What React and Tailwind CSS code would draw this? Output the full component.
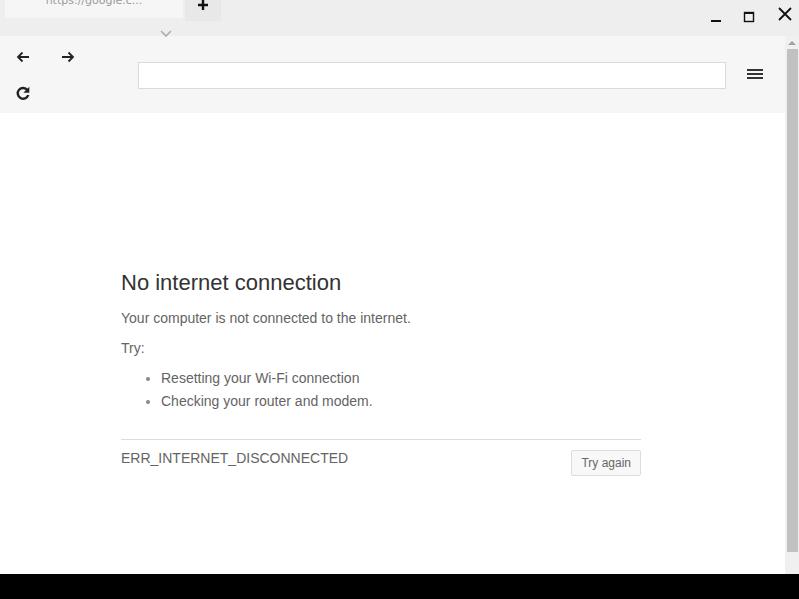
const Icon = ({ children, size = 16 }) => (
  <svg width={size} height={size} viewBox="0 0 16 16" fill="none" stroke="#222" strokeWidth="1.8">
    {children}
  </svg>
);

const App = () => {
  return (
    <div className="w-[799px] h-[599px] flex flex-col bg-black overflow-hidden font-['Liberation_Sans',Arial,sans-serif]">
      {/* title bar */}
      <div className="h-[36px] bg-[#eeeeee] flex relative shrink-0">
        <div className="ml-[5px] w-[178px] h-[18px] bg-[#f6f6f6] overflow-hidden flex justify-center">
          <span className="text-[11px] leading-[12px] text-[#9a9a9a] -mt-[5px] font-['DejaVu_Sans',sans-serif]">
            https://google.c...
          </span>
        </div>
        <div className="ml-[2px] w-[36px] h-[21px] bg-[#e8e8e8] flex items-start justify-center">
          <svg width="12" height="12" viewBox="0 0 12 12" className="-mt-[1px]">
            <path d="M6 1v10M1 6h10" stroke="#111" strokeWidth="2.4" />
          </svg>
        </div>
        <svg width="12" height="7" viewBox="0 0 12 7" className="absolute left-[160px] top-[30px]">
          <path d="M1 1l5 5 5-5" stroke="#aaa" strokeWidth="1.5" fill="none" />
        </svg>
        <div className="ml-auto flex items-start">
          <svg width="12" height="12" viewBox="0 0 12 12" className="mt-[13px] mr-[21px]">
            <path d="M1 8h10" stroke="#111" strokeWidth="2" />
          </svg>
          <svg width="12" height="12" viewBox="0 0 12 12" className="mt-[11px] mr-[22px]">
            <rect x="1.5" y="1.5" width="9" height="9" stroke="#111" strokeWidth="1.4" fill="none" />
            <path d="M1 2h10" stroke="#111" strokeWidth="2" />
          </svg>
          <svg width="16" height="16" viewBox="0 0 16 16" className="mt-[6px] mr-[6px]">
            <path d="M2 2l12 12M14 2L2 14" stroke="#111" strokeWidth="1.8" />
          </svg>
        </div>
      </div>

      <div className="flex flex-1 min-h-0">
        <div className="flex flex-col flex-1">
          {/* toolbar */}
          <div className="h-[77px] bg-[#f6f6f6] flex shrink-0">
            <div className="w-[138px] pt-[13px] pl-[15px]">
              <div className="flex gap-[29px]">
                <Icon>
                  <path d="M14 8H3M7.5 3.5L3 8l4.5 4.5" />
                </Icon>
                <Icon>
                  <path d="M2 8h11M8.5 3.5L13 8l-4.5 4.5" />
                </Icon>
              </div>
              <div className="mt-[20px]">
                <svg width="16" height="16" viewBox="0 0 16 16" fill="none">
                  <path d="M12.4 5A5.4 5.4 0 1 0 13.3 10" stroke="#222" strokeWidth="2.4" />
                  <path d="M14.3 1.8v6H8.3z" fill="#222" />
                </svg>
              </div>
            </div>
            <div className="w-[588px] h-[27px] mt-[26px] bg-white border border-[#dadada]" />
            <div className="flex-1 flex justify-center pt-[32px]">
              <svg width="18" height="12" viewBox="0 0 18 12" className="-ml-[2px]">
                <path d="M1 2h16M1 6h16M1 10h16" stroke="#333" strokeWidth="2" />
              </svg>
            </div>
          </div>

          {/* page */}
          <div className="flex-1 bg-white pl-[121px] pt-[155px]">
            <div className="w-[520px]">
              <h1 className="text-[22px] leading-[30px] text-[#333]">No internet connection</h1>
              <p className="mt-[12px] text-[14px] leading-[16px] text-[#646464]">
                Your computer is not connected to the internet.
              </p>
              <p className="mt-[14px] text-[14px] leading-[16px] text-[#646464]">Try:</p>
              <ul className="mt-[11px] pl-[40px] text-[14px] leading-[23px] text-[#646464] list-disc marker:text-[#888]">
                <li>Resetting your Wi-Fi connection</li>
                <li>Checking your router and modem.</li>
              </ul>
              <div className="mt-[26px] border-t border-[#dcdcdc] pt-[10px] flex justify-between items-start">
                <span className="text-[14px] leading-[16px] text-[#646464]">ERR_INTERNET_DISCONNECTED</span>
                <button className="h-[26px] px-[9px] border border-[#dcdcdc] rounded-[2px] bg-[#f8f8f8] text-[12px] text-[#666]">
                  Try again
                </button>
              </div>
            </div>
          </div>
        </div>

        {/* scrollbar */}
        <div className="w-[14px] bg-[#f0f0f0] flex flex-col items-center">
          <svg width="10" height="6" viewBox="0 0 10 6" className="mt-[4px]">
            <path d="M1 5h8L5 1z" fill="#a3a3a3" />
          </svg>
          <div className="mt-[3px] w-[11px] h-[503px] bg-[#c1c1c1]" />
        </div>
      </div>

      <div className="h-[25px] bg-black shrink-0" />
    </div>
  );
};

export default App;
